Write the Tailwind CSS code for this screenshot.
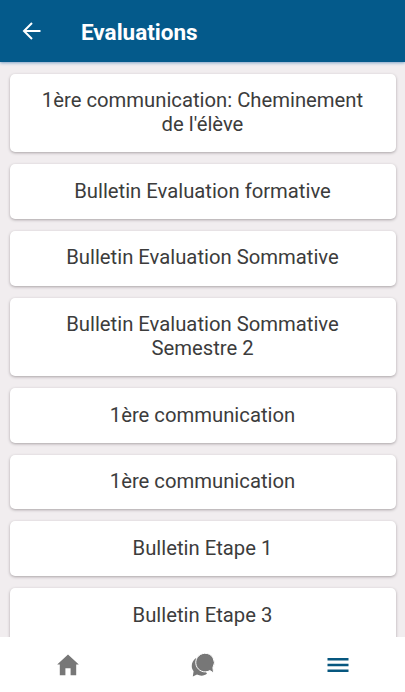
<!DOCTYPE html>
<html lang="fr">
<head>
    <meta charset="UTF-8">
    <meta name="viewport" content="width=device-width, initial-scale=1.0">
    <title>Evaluations</title>
    <script src="https://cdn.jsdelivr.net/npm/@tailwindcss/browser@4"></script>
</head>
<body class="h-screen flex flex-col overflow-hidden bg-[#f1edef] font-['Roboto',sans-serif]">

    <!-- Header -->
    <header class="h-[62px] shrink-0 flex items-center bg-[#045a8b] text-white shadow-[0_1px_3px_#7fa3c7]">
        <button class="ml-[22px] mr-10 w-[19px]" aria-label="Retour">
            <svg class="block" width="19" height="18" viewBox="0 0 19 18" fill="none" stroke="currentColor" stroke-width="2"><path d="M18.5 9H2M10 1L2 9l8 8"/></svg>
        </button>
        <h1 class="pt-[3px] text-[22.5px] font-bold">Evaluations</h1>
    </header>

    <!-- Evaluation list -->
    <main class="flex-1 min-h-0 overflow-hidden">
        <ul class="flex flex-col gap-3 pt-[11.8px] pl-[9.5px] pr-[9.5px] text-center text-[20.25px] leading-[23.7px] text-[#3c3c3c]">
            <li class="rounded-[5px] bg-white px-5 py-[15.5px] shadow-[0_1px_3px_#a9a3a6]">1ère communication: Cheminement<br>de l'élève</li>
            <li class="rounded-[5px] bg-white px-5 py-[15.5px] shadow-[0_1px_3px_#a9a3a6]">Bulletin Evaluation formative</li>
            <li class="rounded-[5px] bg-white px-5 py-[15.5px] shadow-[0_1px_3px_#a9a3a6]">Bulletin Evaluation Sommative</li>
            <li class="rounded-[5px] bg-white px-5 py-[15.5px] shadow-[0_1px_3px_#a9a3a6]">Bulletin Evaluation Sommative<br>Semestre 2</li>
            <li class="rounded-[5px] bg-white px-5 py-[15.5px] shadow-[0_1px_3px_#a9a3a6]">1ère communication</li>
            <li class="rounded-[5px] bg-white px-5 py-[15.5px] shadow-[0_1px_3px_#a9a3a6]">1ère communication</li>
            <li class="rounded-[5px] bg-white px-5 py-[15.5px] shadow-[0_1px_3px_#a9a3a6]">Bulletin Etape 1</li>
            <li class="rounded-[5px] bg-white px-5 py-[15.5px] shadow-[0_1px_3px_#a9a3a6]">Bulletin Etape 3</li>
        </ul>
    </main>

    <!-- Bottom tabs -->
    <nav class="h-[55px] shrink-0 grid grid-cols-3 items-center justify-items-center bg-white text-[#777777]">
        <a href="#" aria-label="Accueil">
            <svg width="22" height="22" viewBox="0 0 22 22" fill="currentColor"><path d="M11 .5L21.8 10.5H19.2V21.2H13.6V14.2H8.4V21.2H2.8V10.5H.2z"/></svg>
        </a>
        <a href="#" aria-label="Messages">
            <svg width="24" height="24" viewBox="0 0 24 24">
                <path fill="currentColor" d="M5 5C0 9-.3 14.5 2.6 18.2L1.8 23.4 6 21.6C9.5 23.4 13.8 22.8 16 20.6z"/>
                <path fill="currentColor" stroke="white" stroke-width="1" d="M13.5.3a9.4 9.3 0 1 0 5.4 17.3L22.6 20 21.9 14.6A9.4 9.3 0 0 0 13.5.3z"/>
            </svg>
        </a>
        <a href="#" class="text-[#07577f]" aria-label="Menu">
            <svg width="22" height="16" viewBox="0 0 22 16" stroke="currentColor" stroke-width="2.4"><path d="M.5 2.2h21M.5 8h21M.5 13.8h21"/></svg>
        </a>
    </nav>

</body>
</html>
